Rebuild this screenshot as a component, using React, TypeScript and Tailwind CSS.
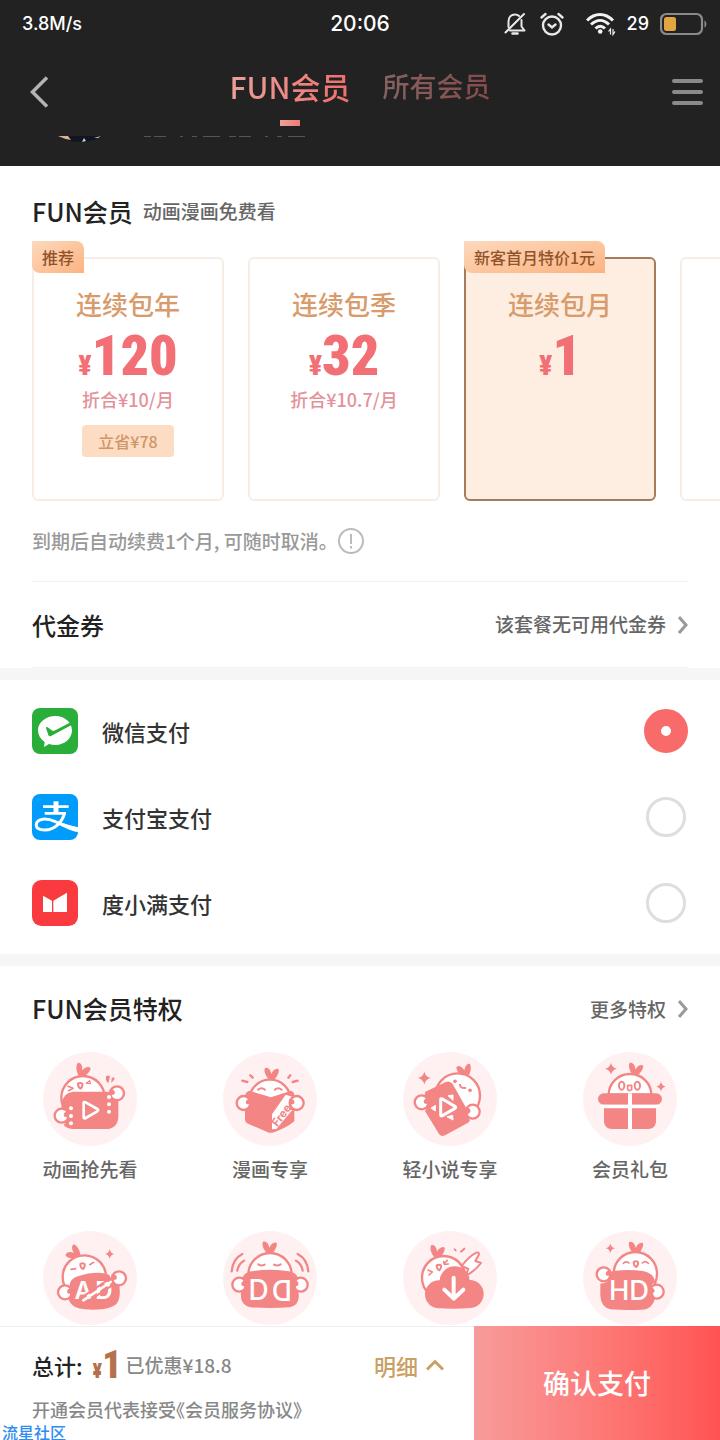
import React, { useState } from "react";

interface Plan {
  id: string;
  name: string;
  price: number;
  monthly?: string;
  saving?: string;
  badge?: string;
}

interface PayMethod {
  id: string;
  name: string;
  icon: React.ReactNode;
}

interface Privilege {
  name?: string;
  icon: React.ReactNode;
}

const PINK = "#f38585";

// ---- status bar ----

const StatusBar: React.FC = () => (
  <div className="grid h-12 grid-cols-[1fr_auto_1fr] items-center px-[13px] font-['Inter',sans-serif] text-white">
    <span className="pl-[9px] text-lg">3.8M/s</span>
    <span className="text-[21px]">20:06</span>
    <div className="flex items-center justify-end">
      <svg className="mr-3.5 h-6 w-[22px]" viewBox="0 0 22 24" fill="none" stroke="#e8e8e8" strokeWidth="2" strokeLinecap="round" strokeLinejoin="round">
        <path d="M4.500 15V9.500C4.500 5.500 7 2.500 11 2.500C12.500 2.500 14 3 15 4M17.500 8V14.500L20.500 18.500H6" />
        <path d="M20 2L1.500 20.500" />
        <path d="M8.500 21.500H13.500" strokeWidth="2.500" />
      </svg>
      <svg className="mr-[22px] size-6" viewBox="0 0 24 24" fill="none" stroke="#e8e8e8" strokeWidth="2.400" strokeLinecap="round">
        <circle cx="12" cy="13.500" r="9" />
        <path d="M8.500 12.500L12 15.500L15.500 12.500" />
        <path d="M1.500 5.500L5.500 2M22.500 5.500L18.500 2" />
      </svg>
      <svg className="mr-[11px] h-6 w-[30px]" viewBox="0 0 30 24" fill="none" stroke="#f2f2f2" strokeWidth="3">
        <path d="M1 8.500C9 0.500 19 0.500 27 8.500" />
        <path d="M5 12.500C11 7 17.500 7 23 12.500" />
        <path d="M9.500 16.500C12.500 13.500 16 13.500 19 16.500" />
        <circle cx="14.200" cy="19.500" r="2.300" fill="#f2f2f2" stroke="none" />
        <path d="M24.500 22.500V17L22.500 19.500M27 17V22.500L29 19.500" strokeWidth="1.200" />
      </svg>
      <span className="mr-[11px] text-lg">29</span>
      <svg className="h-6 w-[47px]" viewBox="0 0 47 24" fill="none">
        <rect x="1" y="2" width="41" height="20" rx="5.500" stroke="#8b8b8b" strokeWidth="2.200" />
        <rect x="4" y="5" width="12" height="14" rx="2.500" fill="#e2a53f" />
        <path d="M44.500 8.500C47 9.500 47 14.500 44.500 15.500Z" fill="#8b8b8b" />
      </svg>
    </div>
  </div>
);

// ---- mascot parts, all icons use a 282 unit canvas ----

const Sprout: React.FC<{ x: number; y: number; turn?: number }> = ({ x, y, turn = 0 }) => (
  <path
    transform={`translate(${x} ${y}) rotate(${turn})`}
    d="M-1 8C-12 0 -23 -20 -17 -30C-7 -34 1 -22 2 -12C6 -22 16 -31 24 -26C27 -15 15 4 6 8Z"
    fill={PINK}
  />
);

const Hand: React.FC<{ x: number; y: number; flip?: boolean }> = ({ x, y, flip }) => (
  <g transform={`translate(${x} ${y})${flip ? " scale(-1 1)" : ""}`}>
    <circle r="21" fill="#fff" stroke={PINK} strokeWidth="7" />
    <path d="M22 -12C12 -14 4 -7 7 1C10 6 16 4 16 4C16 12 12 16 4 19L22 22Z" fill={PINK} />
  </g>
);

const Star: React.FC<{ x: number; y: number; s: number }> = ({ x, y, s }) => (
  <path transform={`translate(${x} ${y}) scale(${s})`} d="M0 -18Q3 -3 18 0Q3 3 0 18Q-3 3 -18 0Q-3 -3 0 -18Z" fill={PINK} />
);

const Mouth: React.FC<{ x: number; y: number }> = ({ x, y }) => (
  <path transform={`translate(${x} ${y})`} d="M-6 -6Q0 -10 7 -6Q9 2 2 9Q-6 6 -6 -6Z" fill="#fff" stroke={PINK} strokeWidth="6" />
);

const Badge: React.FC<{ children: React.ReactNode }> = ({ children }) => (
  <svg className="size-[94px] font-['Inter',sans-serif]" viewBox="0 0 282 282" fill="none" strokeLinecap="round" strokeLinejoin="round">
    <circle cx="141" cy="141" r="141" fill="#fff1f1" />
    {children}
  </svg>
);

const VideoIcon = () => (
  <Badge>
    <Sprout x={112} y={66} turn={18} />
    <circle cx="120" cy="137" r="65" fill="#fff" stroke={PINK} strokeWidth="7" />
    <path d="M75 103L90 109L77 116" stroke={PINK} strokeWidth="5" />
    <Mouth x={111} y={101} />
    <path d="M130 94L140 86L142 95Z" stroke={PINK} strokeWidth="4" />
    <Hand x={222} y={124} flip />
    <path d="M90 119H192Q204 119 206 132Q210 142 226 141V194Q224 231 188 231H92Q72 231 62 219Q78 205 70 190Q64 178 56 172V155Q60 122 90 119Z" fill={PINK} />
    <Hand x={56} y={191} />
    <path d="M73 208L64 219L92 231V208Z" fill={PINK} />
    <g fill="#fff">
      <circle cx="84" cy="169" r="6" /><circle cx="84" cy="192" r="6" /><circle cx="84" cy="214" r="6" />
      <circle cx="198" cy="135" r="6" /><circle cx="198" cy="157" r="6" /><circle cx="198" cy="179" r="6" />
    </g>
    <path d="M122 153Q122 148 128 151L163 171Q168 174 163 178L128 198Q122 201 122 196Z" stroke="#fff" strokeWidth="8" />
    <path d="M189 73Q198 67 201 74L196 94Q187 88 189 73ZM206 78Q214 72 215 81L205 93Z" fill={PINK} />
  </Badge>
);

const ComicIcon = () => (
  <Badge>
    <Sprout x={143} y={78} />
    <ellipse cx="141" cy="141" rx="61" ry="58" fill="#fff" stroke={PINK} strokeWidth="7" />
    <path d="M105 113Q115 104 126 113M155 113Q165 104 176 113" stroke={PINK} strokeWidth="6" />
    <path d="M58 86L73 90M82 70L89 77M202 70L196 77M224 86L209 90" stroke={PINK} strokeWidth="7" />
    <path d="M78 116L144 136L204 116Q214 120 214 130V208Q184 232 148 242Q142 243 138 242L72 214Q66 210 66 204V130Q68 120 78 116Z" fill={PINK} />
    <path d="M147 187L188 128L210 135L207 175L160 231L147 232Z" fill="#fff" />
    <Hand x={62} y={153} />
    <Hand x={221} y={153} flip />
    <text x="163" y="226" transform="rotate(-53 163 226)" fill={PINK} fontSize="34" fontWeight="700">Free</text>
  </Badge>
);

const NovelIcon = () => (
  <Badge>
    <Star x={64} y={78} s={1.1} />
    <Sprout x={186} y={68} turn={-18} />
    <circle cx="164" cy="131" r="67" fill="#fff" stroke={PINK} strokeWidth="7" />
    <circle cx="156" cy="88" r="5.500" fill={PINK} />
    <circle cx="201" cy="115" r="5.500" fill={PINK} />
    <path d="M171 98Q172 110 187 108" stroke={PINK} strokeWidth="6" />
    <Hand x={56} y={151} />
    <Hand x={209} y={179} flip />
    <path d="M66 120L128 90Q141 85 149 96L198 183Q186 194 201 204Q200 210 194 213L126 250Q115 255 108 246L66 177Q82 160 70 146Q63 132 66 120Z" fill={PINK} />
    <path d="M113 143Q113 138 118 141L156 163Q160 166 156 169L118 191Q113 193 113 189Z" stroke="#fff" strokeWidth="9" />
    <path d="M85 168L97 160V176ZM136 131L150 129V144ZM133 194L149 190L150 203Z" fill="#fff" stroke="#fff" strokeWidth="3" />
  </Badge>
);

const GiftIcon = () => (
  <Badge>
    <Star x={84} y={50} s={1} />
    <Star x={234} y={104} s={0.8} />
    <Sprout x={154} y={64} turn={6} />
    <path d="M77 128A64 62 0 0 1 205 128Z" fill="#fff" stroke={PINK} strokeWidth="7" />
    <ellipse cx="116" cy="101" rx="8" ry="12" stroke={PINK} strokeWidth="6" />
    <ellipse cx="163" cy="101" rx="8" ry="12" stroke={PINK} strokeWidth="6" />
    <path d="M134 100H146V112Q140 120 134 112Z" stroke={PINK} strokeWidth="5" />
    <rect x="45" y="124" width="192" height="34" rx="17" fill={PINK} />
    <path d="M63 169H219V210Q216 231 196 231H86Q66 231 63 210Z" fill={PINK} />
    <path d="M141 124V231" stroke="#fff" strokeWidth="12" strokeLinecap="butt" />
    <path d="M58 163H224" stroke="#fff" strokeWidth="10" />
  </Badge>
);

const NoAdIcon = () => (
  <Badge>
    <Star x={200} y={69} s={0.8} />
    <Sprout x={102} y={74} turn={-58} />
    <circle cx="124" cy="138" r="65" fill="#fff" stroke={PINK} strokeWidth="7" />
    <path d="M84 115L98 113M140 101L152 94" stroke={PINK} strokeWidth="5" />
    <Mouth x={118} y={105} />
    <Hand x={66} y={184} />
    <Hand x={228} y={142} flip />
    <path d="M110 134Q150 120 190 128Q203 130 205 148Q212 162 229 162Q234 200 222 217Q206 236 150 236Q100 236 88 222Q78 214 76 202Q90 190 80 172Q76 142 110 134Z" fill={PINK} />
    <text x="121" y="203" textAnchor="middle" fill="#fff" fontSize="72" fontWeight="600">A</text>
    <text x="183" y="203" textAnchor="middle" fill="#fff" fontSize="72" fontWeight="600">D</text>
    <path d="M130 214L212 160" stroke={PINK} strokeWidth="6" strokeLinecap="butt" />
    <path d="M112 202L196 146" stroke={PINK} strokeWidth="6" strokeLinecap="butt" />
    <path d="M121 208L203 153" stroke="#fff" strokeWidth="8" />
  </Badge>
);

const DanmakuIcon = () => (
  <Badge>
    <Sprout x={137} y={62} />
    <circle cx="141" cy="131" r="65" fill="#fff" stroke={PINK} strokeWidth="7" />
    <path d="M106 100Q115 106 125 101M153 101Q163 106 173 100" stroke={PINK} strokeWidth="6" />
    <Hand x={49} y={161} />
    <Hand x={233} y={161} flip />
    <path d="M96 119Q141 114 186 119Q222 122 226 142Q208 160 226 182Q234 222 200 229Q141 233 82 229Q50 222 54 184Q74 164 57 142Q62 122 96 119Z" fill={PINK} />
    <text x="107" y="207" textAnchor="middle" fill="#fff" fontSize="84" fontWeight="500">D</text>
    <text x="-177" y="-146" textAnchor="middle" transform="rotate(180)" fill="#fff" fontSize="84" fontWeight="500">D</text>
    <path d="M26 121Q29 84 58 69M43 119Q46 98 63 89M256 121Q253 84 224 69M239 119Q236 98 219 89" stroke={PINK} strokeWidth="7" />
  </Badge>
);

const DownloadIcon = () => (
  <Badge>
    <Sprout x={99} y={74} turn={5} />
    <circle cx="122" cy="140" r="65" fill="#fff" stroke={PINK} strokeWidth="7" />
    <path d="M75 117L88 123L78 132M122 92L124 100L136 99M125 96L133 88" stroke={PINK} strokeWidth="5" />
    <Mouth x={107} y={109} />
    <path d="M155 55L158 58M174 62L184 53" stroke={PINK} strokeWidth="6" />
    <circle cx="108" cy="190" r="42" fill={PINK} />
    <circle cx="155" cy="151" r="45" fill={PINK} />
    <circle cx="200" cy="189" r="42" fill={PINK} />
    <path d="M104 170H200V231Q150 235 104 231Z" fill={PINK} />
    <path d="M220 65Q198 76 176 105L196 114L188 134Q214 122 234 96L217 90L228 70Q228 62 220 65Z" fill="#fff" stroke={PINK} strokeWidth="6" />
    <path d="M152 140V202M124 176L152 203L181 176" stroke="#fff" strokeWidth="12" />
  </Badge>
);

const HdIcon = () => (
  <Badge>
    <Star x={82} y={52} s={0.8} />
    <Sprout x={156} y={63} />
    <circle cx="157" cy="128" r="65" fill="#fff" stroke={PINK} strokeWidth="7" />
    <path d="M121 97Q129 88 138 96M178 96Q187 88 196 97" stroke={PINK} strokeWidth="5" />
    <Mouth x={158} y={99} />
    <Hand x={62} y={130} />
    <Hand x={221} y={182} flip />
    <path d="M92 120Q140 114 180 120Q212 126 216 152Q202 160 207 176Q208 190 216 200Q208 236 176 236Q130 238 82 235Q54 228 52 194V158Q84 158 82 122Z" fill={PINK} />
    <text x="138" y="207" textAnchor="middle" fill="#fff" fontSize="82" fontWeight="500">HD</text>
  </Badge>
);

// ---- payment logos ----

const WechatLogo = () => (
  <svg className="size-[46px]" viewBox="0 0 138 138">
    <rect width="138" height="138" rx="24" fill="#2aae3a" />
    <path d="M70 24C98 24 120 43 120 67C120 92 98 111 70 111C63 111 57 110 51 108L36 117L38 102C25 93 18 81 18 67C18 43 42 24 70 24Z" fill="#fff" />
    <path d="M42 60Q42 55 47 58L59 67Q64 70 70 67L112 45Q118 42 118 48L120 50L57 84Q51 87 49 81Z" fill="#2aae3a" />
  </svg>
);

const AlipayLogo = () => (
  <svg className="size-[46px]" viewBox="0 0 138 138" fill="none" stroke="#fff">
    <rect width="138" height="138" rx="24" fill="#009cfb" stroke="none" />
    <path d="M33 38H110M38 58H102" strokeWidth="8" />
    <path d="M72 22V58" strokeWidth="15" />
    <path d="M98 56C92 82 70 108 38 108C20 108 11 102 13 90C16 73 43 71 70 83C95 93 112 101 138 107" strokeWidth="9" />
    <path d="M86 85C108 93 122 97 138 99V114C120 112 98 102 76 90Z" fill="#fff" stroke="none" />
  </svg>
);

const DuxiaomanLogo = () => (
  <svg className="size-[46px]" viewBox="0 0 138 138">
    <rect width="138" height="138" rx="28" fill="#f93a3e" />
    <path d="M33 47L60 62V96H33ZM64 62L105 38V96H64Z" fill="#fff" />
  </svg>
);

const ArrowRight = () => (
  <svg className="h-5 w-2.5" viewBox="0 0 10 20" fill="none" stroke="#999" strokeWidth="3">
    <path d="M1 2L8 10L1 18" />
  </svg>
);

const plans: Plan[] = [
  { id: "year", name: "连续包年", price: 120, monthly: "折合¥10/月", saving: "立省¥78", badge: "推荐" },
  { id: "quarter", name: "连续包季", price: 32, monthly: "折合¥10.7/月" },
  { id: "month", name: "连续包月", price: 1, badge: "新客首月特价1元" },
];

const payMethods: PayMethod[] = [
  { id: "wechat", name: "微信支付", icon: <WechatLogo /> },
  { id: "alipay", name: "支付宝支付", icon: <AlipayLogo /> },
  { id: "duxiaoman", name: "度小满支付", icon: <DuxiaomanLogo /> },
];

const privileges: Privilege[] = [
  { name: "动画抢先看", icon: <VideoIcon /> },
  { name: "漫画专享", icon: <ComicIcon /> },
  { name: "轻小说专享", icon: <NovelIcon /> },
  { name: "会员礼包", icon: <GiftIcon /> },
  { icon: <NoAdIcon /> },
  { icon: <DanmakuIcon /> },
  { icon: <DownloadIcon /> },
  { icon: <HdIcon /> },
];

const App: React.FC = () => {
  const [plan, setPlan] = useState("month");
  const [pay, setPay] = useState("wechat");

  return (
    <div className="relative flex min-h-screen flex-col bg-white font-['Noto_Sans_CJK_SC',sans-serif] font-medium text-[#222]">
      <header className="bg-[#222]">
        <StatusBar />
        <nav className="flex h-[88px] items-center justify-between pl-[30px] pr-[17px]">
          <button type="button" aria-label="返回">
            <svg className="h-8 w-[18px]" viewBox="0 0 18 32" fill="none" stroke="#b4b4b4" strokeWidth="3.500">
              <path d="M17 1.500L2.500 16L17 30.500" />
            </svg>
          </button>
          <div className="flex items-start gap-8 pt-2 leading-10">
            <button type="button" className="flex flex-col items-center gap-3.5 text-[30px]">
              <span className="bg-linear-to-r from-[#e8a09b] to-[#ee6e6c] bg-clip-text text-transparent">FUN会员</span>
              <span className="h-1.5 w-5 bg-linear-to-r from-[#efa09c] to-[#f07a76]" />
            </button>
            <button type="button" className="bg-linear-to-r from-[#866361] to-[#854a4a] bg-clip-text text-[27px] text-transparent">所有会员</button>
          </div>
          <button type="button" aria-label="菜单">
            <svg className="h-[26px] w-[31px]" viewBox="0 0 31 26" stroke="#8a8a8a" strokeWidth="4" strokeLinecap="round">
              <path d="M2 2H29M2 13H29M2 24H29" />
            </svg>
          </button>
        </nav>
        {/* profile row, scrolled under the nav */}
        <div className="flex h-[30px] items-start gap-[42px] pl-[58px]">
          <svg className="h-1.5 w-11" viewBox="0 0 44 6">
            <path d="M0 0H44Q22 12 0 0Z" fill="#10151f" />
            <path d="M0 0H10L13 4Q6 3 0 0Z" fill="#d9b29a" />
            <path d="M24 6L26 2L28 5ZM36 2L43 0L40 2Z" fill="#d0d0d4" />
          </svg>
          <svg className="h-px w-[163px]" viewBox="0 0 163 1" stroke="#555" strokeDasharray="7 3 12 14 3 9 5 6 17 9">
            <path d="M0 0.500H163" />
          </svg>
        </div>
      </header>

      <main>
        <section>
          <h2 className="flex items-center gap-2.5 px-8 pt-[27px] leading-9">
            <span className="text-[25px]">FUN会员</span>
            <span className="text-[19px] text-[#666]">动画漫画免费看</span>
          </h2>
          <div className="mt-2 flex gap-6 overflow-hidden pt-5 pl-8">
            {plans.map(p => (
              <button
                key={p.id}
                type="button"
                aria-pressed={plan === p.id}
                onClick={() => setPlan(p.id)}
                className={`relative flex h-[244px] w-48 shrink-0 flex-col items-center rounded-md border-2 pt-[29px] ${plan === p.id ? "border-[#a47c5c] bg-[#feede1]" : "border-[#f6eee6] bg-white"}`}
              >
                {p.badge && (
                  <span className="absolute -left-0.5 -top-[18px] h-8 rounded-tr-lg rounded-bl-lg bg-linear-to-br from-[#fcd9bd] to-[#fbb380] px-2.5 text-base leading-8 text-[#93532a]">{p.badge}</span>
                )}
                <span className="text-[26px] leading-8 text-[#d79b6c]">{p.name}</span>
                <span className="mt-1.5 flex items-baseline font-['Liberation_Sans_Narrow','Roboto_Condensed','Inter',sans-serif] font-black text-[#f27075]">
                  <span className="text-[28px]">¥</span>
                  <span className="text-[56px] leading-[60px]">{p.price}</span>
                </span>
                {p.monthly && <span className="text-lg leading-6 text-[#e3929a]">{p.monthly}</span>}
                {p.saving && <span className="mt-3.5 rounded-sm bg-[#fddcc4] px-4 text-base leading-8 text-[#cf9467]">{p.saving}</span>}
              </button>
            ))}
            <div className="h-[244px] w-48 shrink-0 rounded-md border-2 border-[#f6eee6]" />
          </div>
          <div className="mx-8 flex items-center border-b border-[#f2f2f2] py-[26px] text-[19px] leading-7 text-[#999]">
            <p>到期后自动续费1个月, 可随时取消。</p>
            <svg className="size-[26px]" viewBox="0 0 26 26" fill="none" stroke="#bbb" strokeWidth="2">
              <circle cx="13" cy="13" r="12" />
              <path d="M13 6V16M13 18V20.500" />
            </svg>
          </div>
          <div className="mx-8 flex h-[86px] items-center justify-between border-b border-[#f2f2f2]">
            <h2 className="text-2xl">代金券</h2>
            <button type="button" className="flex items-center gap-3 text-[19px] text-[#666]">
              该套餐无可用代金券
              <ArrowRight />
            </button>
          </div>
        </section>

        <section className="border-y-12 border-[#f6f6f6] px-8 py-2">
          {payMethods.map(m => (
            <label key={m.id} className="flex h-[86px] items-center gap-6 text-[22px] text-[#333]">
              {m.icon}
              <span className="flex-1">{m.name}</span>
              <input
                type="radio"
                name="pay"
                checked={pay === m.id}
                onChange={() => setPay(m.id)}
                className="mx-0.5 size-10 appearance-none rounded-full border-3 border-[#dedede] checked:mx-0 checked:size-11 checked:border-[17px] checked:border-[#f96b6b] checked:bg-white"
              />
            </label>
          ))}
        </section>

        <section className="pb-px">
          <div className="flex h-[86px] items-center justify-between px-8">
            <h2 className="text-[25px]">FUN会员特权</h2>
            <button type="button" className="flex items-center gap-3 text-[19px] text-[#666]">
              更多特权
              <ArrowRight />
            </button>
          </div>
          <ul className="grid grid-cols-4 gap-y-[50px]">
            {privileges.map((p, i) => (
              <li key={i} className="flex flex-col items-center gap-[11px]">
                {p.icon}
                {p.name && <span className="text-[19px] leading-6 text-[#666]">{p.name}</span>}
              </li>
            ))}
          </ul>
        </section>
      </main>

      <footer className="mt-auto flex h-[114px]">
        <div className="flex-1 border-t border-[#eee] pt-[18px] pr-[30px] pl-8">
          <div className="flex h-10 items-center">
            <span className="text-[22px]">总计:</span>
            <span className="ml-2.5 flex items-baseline font-['Liberation_Sans_Narrow','Roboto_Condensed','Inter',sans-serif] font-black text-[#b5714b]">
              <span className="text-xl">¥</span>
              <span className="text-[38px] leading-10">1</span>
            </span>
            <span className="ml-1 text-[19px] text-[#888]">已优惠¥18.8</span>
            <button type="button" className="ml-auto flex items-center gap-2 text-[22px] text-[#c9a063]">
              明细
              <svg className="h-3 w-[18px]" viewBox="0 0 18 12" fill="none" stroke="currentColor" strokeWidth="3">
                <path d="M1 10.500L9 2.500L17 10.500" />
              </svg>
            </button>
          </div>
          <p className="mt-3 text-lg leading-6 text-[#888] [font-feature-settings:'halt']">开通会员代表接受<a href="#agreement">《会员服务协议》</a></p>
        </div>
        <button type="button" className="w-[246px] bg-linear-to-r from-[#f79b9b] to-[#ff5252] text-[27px] text-white">确认支付</button>
      </footer>
      <span className="absolute bottom-0 left-0.5 text-base leading-4 text-[#2f8cf0]">流星社区</span>
    </div>
  );
};

export default App;
